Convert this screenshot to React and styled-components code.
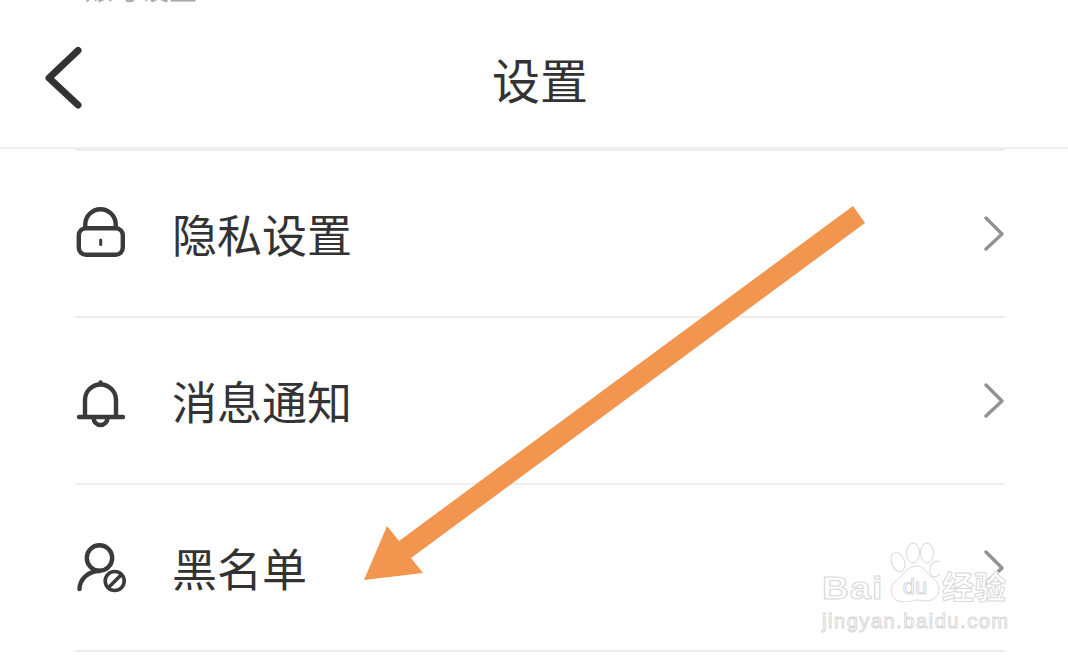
import React from 'react';
import styled, { createGlobalStyle } from 'styled-components';

const GlobalStyle = createGlobalStyle`
  html, body {
    margin: 0;
    padding: 0;
    background: #fff;
  }
`;

const Page = styled.div`
  position: relative;
  width: 1068px;
  height: 656px;
  overflow: hidden;
  background: #fff;
  color: #333;
  font-family: 'Noto Sans CJK SC', 'Noto Sans', sans-serif;
`;

const PreviousTitle = styled.div`
  height: 3px;
  padding-left: 85px;
  overflow: hidden;
  font-size: 28px;
  line-height: 3px;
  color: #aaa;

  span {
    display: block;
    margin-top: -13px;
  }
`;

const Header = styled.header`
  display: grid;
  grid-template-columns: 1fr auto 1fr;
  align-items: center;
  box-sizing: border-box;
  height: 146px;
  padding: 6px 0 0 12px;
  border-bottom: 2px solid #eee;
`;

const BackIcon = styled.svg`
  display: block;
  width: 46px;
  height: 68px;
  margin-left: 28px;
  fill: none;
  stroke: #333;
  stroke-width: 7;
  stroke-linecap: round;
  stroke-linejoin: round;
`;

const Title = styled.h1`
  margin: 0;
  font-size: 48px;
  font-weight: 400;
  line-height: 60px;
  color: #333;
`;

const List = styled.ul`
  margin: 0 63px 0 75px;
  padding: 0;
  list-style: none;
  border-top: 2px solid #eee;
`;

const Row = styled.li`
  display: flex;
  align-items: center;
  box-sizing: border-box;
  height: 167px;
  border-bottom: 2px solid #eee;
`;

const RowIcon = styled.svg`
  display: block;
  flex: none;
  width: 54px;
  height: 54px;
  margin-top: ${(p) => p.$shift}px;
  fill: none;
  stroke: #3a3a3a;
  stroke-width: 4.4;
  stroke-linecap: round;
  stroke-linejoin: round;
`;

const Label = styled.span`
  flex: 1;
  margin-left: 43px;
  font-size: 45px;
  line-height: 58px;
  color: #333;
`;

const RowChevron = styled.svg`
  display: block;
  flex: none;
  width: 24px;
  height: 40px;
  margin-right: 1px;
  fill: none;
  stroke: #929292;
  stroke-width: 3.4;
  stroke-linecap: round;
  stroke-linejoin: round;
`;

const ArrowOverlay = styled.svg`
  position: absolute;
  left: 0;
  top: 0;
  width: 1068px;
  height: 656px;
  pointer-events: none;
`;

const Watermark = styled.div`
  position: absolute;
  left: 822px;
  top: 541px;
  width: 190px;
  height: 92px;
  font-family: 'Liberation Sans', Arial, sans-serif;
  color: #fff;
  -webkit-text-stroke: 1px #d8d8d8;
`;

const MarkTop = styled.div`
  display: flex;
  align-items: flex-end;
  height: 62px;
`;

const MarkLatin = styled.span`
  width: 66px;
  margin-bottom: -6px;
  font-size: 31px;
  font-weight: 700;
  line-height: 40px;
  letter-spacing: 1px;
  transform: scaleX(1.2);
  transform-origin: left center;
  white-space: nowrap;
`;

const Paw = styled.svg`
  display: block;
  flex: none;
  width: 54px;
  height: 60px;
  margin-left: -2px;
  margin-bottom: 1px;
  fill: #fff;
  stroke: #d8d8d8;
  stroke-width: 1;
`;

const MarkCjk = styled.span`
  margin-left: 2px;
  margin-bottom: -2px;
  font-family: 'Noto Sans CJK SC', sans-serif;
  font-size: 32px;
  font-weight: 700;
  line-height: 40px;
  white-space: nowrap;
`;

const MarkUrl = styled.div`
  margin-top: 7px;
  font-size: 20px;
  line-height: 22px;
  letter-spacing: 1.55px;
  white-space: nowrap;
`;

function LockIcon() {
  return (
    <RowIcon viewBox="0 0 54 54" $shift={-2}>
      <rect x="3.8" y="22.25" width="44" height="26.5" rx="7" />
      <path d="M10.25 22v-3.5a15.25 15.25 0 0 1 30.5 0V22" />
      <path d="M25.7 34v4.5" strokeWidth="3" />
    </RowIcon>
  );
}

function BellIcon() {
  return (
    <RowIcon viewBox="0 0 54 54" $shift={0}>
      <path d="M4 43h44" />
      <path d="M10 43V26a15.5 15.5 0 0 1 31 0v17" />
      <path d="M18.5 44a7 7 0 0 0 14 0" />
      <path d="M25.5 8.5v.5" />
    </RowIcon>
  );
}

function BlockedUserIcon() {
  return (
    <RowIcon viewBox="0 0 54 54" $shift={0}>
      <circle cx="24.5" cy="17" r="12.7" />
      <path d="M4.5 48A20 18 0 0 1 24.5 30" />
      <circle cx="39.7" cy="40" r="9.5" strokeWidth="3.6" />
      <path d="M35 45l10-10" strokeWidth="3.6" />
    </RowIcon>
  );
}

const rows = [
  { label: '隐私设置', Icon: LockIcon },
  { label: '消息通知', Icon: BellIcon },
  { label: '黑名单', Icon: BlockedUserIcon },
];

function App() {
  return (
    <Page>
      <GlobalStyle />
      <PreviousTitle>
        <span>账号设置</span>
      </PreviousTitle>
      <Header>
        <BackIcon viewBox="0 0 46 68">
          <path d="M38 6.5L9 34l29 27" />
        </BackIcon>
        <Title>设置</Title>
      </Header>
      <List>
        {rows.map(({ label, Icon }) => (
          <Row key={label}>
            <Icon />
            <Label>{label}</Label>
            <RowChevron viewBox="0 0 24 40">
              <path d="M6 4l16 16L6 35" />
            </RowChevron>
          </Row>
        ))}
      </List>
      <Watermark>
        <MarkTop>
          <MarkLatin>Bai</MarkLatin>
          <Paw viewBox="0 0 54 60">
            <ellipse cx="12" cy="20" rx="6.5" ry="10" transform="rotate(-20 12 20)" />
            <ellipse cx="27" cy="11" rx="6.5" ry="10" />
            <ellipse cx="41" cy="11" rx="6.5" ry="10" />
            <ellipse cx="50" cy="27" rx="6" ry="8" transform="rotate(20 50 27)" />
            <path d="M31 24c7 0 9 7 14 11 5 3 8 7 8 12 0 8-6 12-13 12-4 0-6-1-9-1s-6 2-12 2C10 60 5 55 5 48c0-6 5-9 9-13 5-4 8-11 17-11z" />
            <text x="29" y="52" textAnchor="middle" fontFamily="'Liberation Sans', sans-serif" fontSize="22">
              du
            </text>
          </Paw>
          <MarkCjk>经验</MarkCjk>
        </MarkTop>
        <MarkUrl>jingyan.baidu.com</MarkUrl>
      </Watermark>
      <ArrowOverlay viewBox="0 0 1068 656">
        <polygon
          points="853,206 865,223 411,558 423,573 364,580 387,526 399,541"
          fill="#f2954e"
        />
      </ArrowOverlay>
    </Page>
  );
}

export default App;
